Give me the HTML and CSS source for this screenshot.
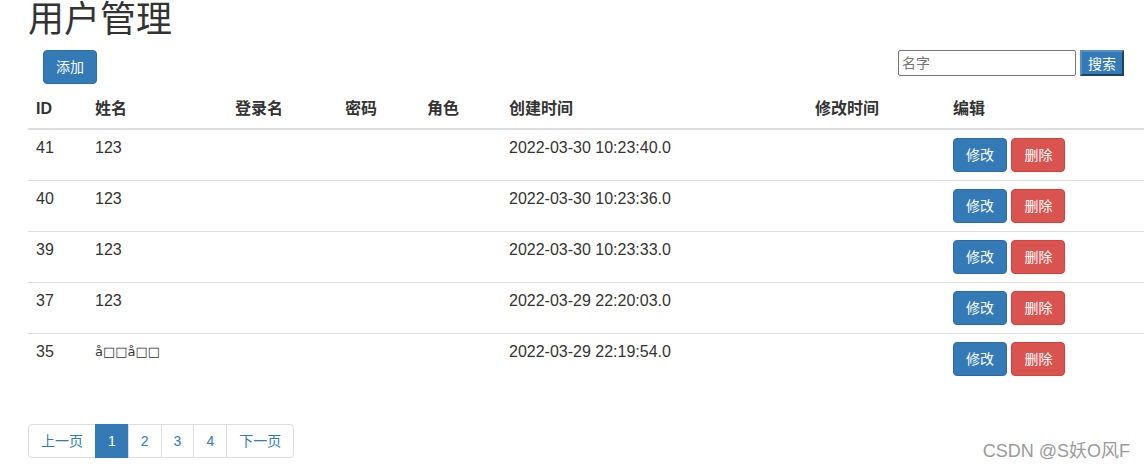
FILE: index.html
```html
<!DOCTYPE html>
<html>
<head>
  <meta charset="utf-8">
  <title>用户管理</title>
  <link rel="stylesheet" href="styles.css">
</head>
<body>
  <div class="page">
    <h1>用户管理</h1>
    <div class="toolbar">
      <button class="btn btn-primary">添加</button>
      <form class="search">
        <input type="text" class="search-input" placeholder="名字">
        <button type="button" class="search-button">搜索</button>
      </form>
    </div>

    <table class="table">
      <colgroup>
        <col style="width: 59px">
        <col style="width: 140px">
        <col style="width: 110px">
        <col style="width: 82px">
        <col style="width: 82px">
        <col style="width: 306px">
        <col style="width: 138px">
        <col>
      </colgroup>
      <thead>
        <tr>
          <th>ID</th>
          <th>姓名</th>
          <th>登录名</th>
          <th>密码</th>
          <th>角色</th>
          <th>创建时间</th>
          <th>修改时间</th>
          <th>编辑</th>
        </tr>
      </thead>
      <tbody>
        <tr>
          <td>41</td><td>123</td><td></td><td></td><td></td>
          <td>2022-03-30 10:23:40.0</td><td></td>
          <td><button class="btn btn-primary">修改</button> <button class="btn btn-danger">删除</button></td>
        </tr>
        <tr>
          <td>40</td><td>123</td><td></td><td></td><td></td>
          <td>2022-03-30 10:23:36.0</td><td></td>
          <td><button class="btn btn-primary">修改</button> <button class="btn btn-danger">删除</button></td>
        </tr>
        <tr>
          <td>39</td><td>123</td><td></td><td></td><td></td>
          <td>2022-03-30 10:23:33.0</td><td></td>
          <td><button class="btn btn-primary">修改</button> <button class="btn btn-danger">删除</button></td>
        </tr>
        <tr>
          <td>37</td><td>123</td><td></td><td></td><td></td>
          <td>2022-03-29 22:20:03.0</td><td></td>
          <td><button class="btn btn-primary">修改</button> <button class="btn btn-danger">删除</button></td>
        </tr>
        <tr>
          <td>35</td><td class="garbled">å□□å□□</td><td></td><td></td><td></td>
          <td>2022-03-29 22:19:54.0</td><td></td>
          <td><button class="btn btn-primary">修改</button> <button class="btn btn-danger">删除</button></td>
        </tr>
      </tbody>
    </table>

    <ul class="pagination">
      <li><a href="#">上一页</a></li>
      <li class="active"><a href="#">1</a></li>
      <li><a href="#">2</a></li>
      <li><a href="#">3</a></li>
      <li><a href="#">4</a></li>
      <li><a href="#">下一页</a></li>
    </ul>
  </div>

  <div class="watermark">CSDN @S妖O风F</div>
</body>
</html>
```

FILE: styles.css
```css
/* bootstrap-ish look */
html, body {
  margin: 0;
  height: 100%;
}

body {
  font-family: "Liberation Sans", Arial, "Noto Sans CJK SC", sans-serif;
  font-size: 14px;
  line-height: 20px;
  color: #333;
  background-color: #fff;
  overflow: hidden;
  position: relative;
}

.page {
  padding-left: 28px;
}

h1 {
  margin: 0;
  font-size: 36px;
  line-height: 40px;
  font-weight: normal;
  color: #333;
}

.toolbar {
  display: flex;
  justify-content: space-between;
  align-items: flex-start;
  margin-top: 10px;
  margin-bottom: 6px;
  padding-left: 15px;
  padding-right: 20px;
}

.btn {
  display: inline-block;
  padding: 6px 12px;
  font-family: inherit;
  font-size: 14px;
  line-height: 20px;
  color: #fff;
  border: 1px solid transparent;
  border-radius: 4px;
  cursor: pointer;
  vertical-align: top;
}

.btn-primary {
  background-color: #337ab7;
  border-color: #2e6da4;
}

.btn-danger {
  background-color: #d9534f;
  border-color: #d43f3a;
}

.search {
  display: flex;
  gap: 4px;
  margin: 0;
}

.search-input {
  width: 178px;
  height: 26px;
  box-sizing: border-box;
  padding: 1px 3px;
  border: 1px solid #767676;
  border-radius: 2px;
  font-family: inherit;
  font-size: 14px;
}

.search-input::placeholder {
  color: #757575;
}

.search-button {
  width: 44px;
  height: 26px;
  box-sizing: border-box;
  padding: 0;
  background-color: #337ab7;
  color: #fff;
  font-family: inherit;
  font-size: 14px;
  border: 2px solid;
  border-color: #5b8fc0 #1d4466 #1d4466 #5b8fc0;
}

.table {
  width: 1220px;
  table-layout: fixed;
  border-collapse: collapse;
  border-spacing: 0;
  font-size: 16px;
}

.table th,
.table td {
  padding: 8px;
  text-align: left;
  white-space: nowrap;
}

.table th {
  line-height: 22px;
  font-weight: bold;
  vertical-align: bottom;
  border-bottom: 2px solid #ddd;
}

.table td {
  line-height: 20px;
  vertical-align: top;
  border-top: 1px solid #ddd;
}

.table thead + tbody tr:first-child td {
  border-top: 0;
}

.garbled {
  font-family: "DejaVu Sans", sans-serif;
  font-size: 13px;
}

.pagination {
  display: flex;
  margin: 40px 0 20px;
  padding: 0;
  list-style: none;
}

.pagination a {
  display: block;
  padding: 6px 12px;
  line-height: 20px;
  color: #337ab7;
  text-decoration: none;
  border: 1px solid #ddd;
  margin-left: -1px;
}

.pagination li:first-child a {
  margin-left: 0;
  border-radius: 4px 0 0 4px;
}

.pagination li:last-child a {
  border-radius: 0 4px 4px 0;
}

.pagination .active a {
  background-color: #337ab7;
  border-color: #337ab7;
  color: #fff;
}

.watermark {
  position: absolute;
  right: 14px;
  bottom: 7px;
  font-size: 18px;
  color: #9a9a9a;
  text-shadow: 0 0 1px #fff;
}
```
